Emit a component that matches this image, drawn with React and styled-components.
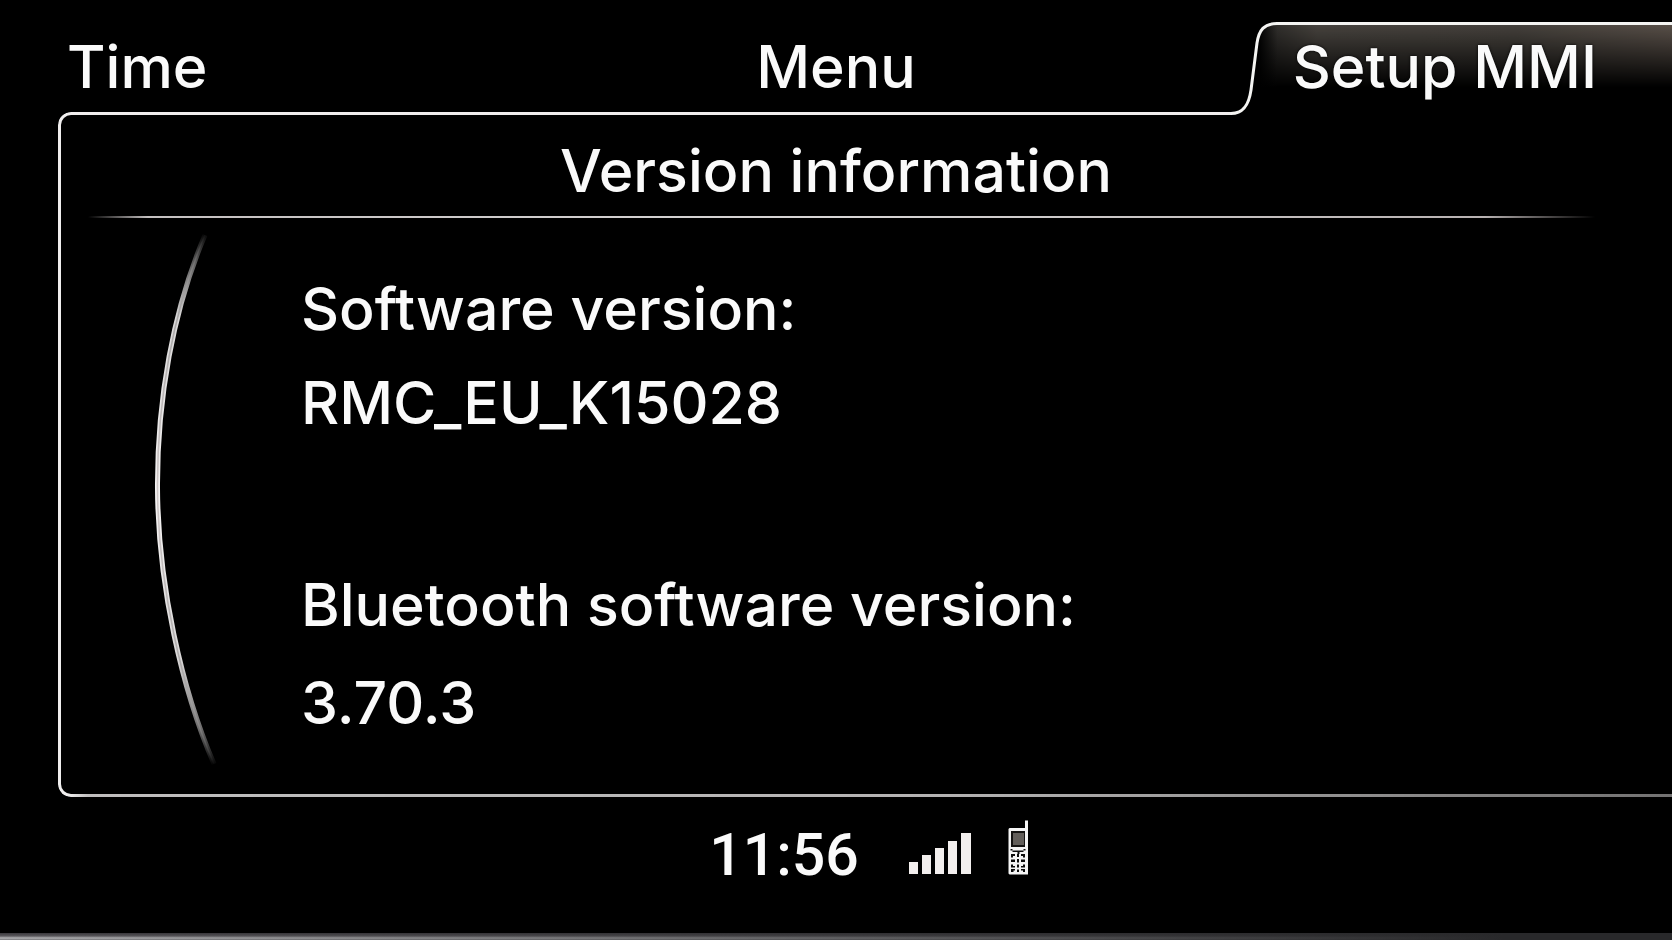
import React from 'react';
import styled, { createGlobalStyle } from 'styled-components';

const GlobalStyle = createGlobalStyle`
  *, *::before, *::after { box-sizing: border-box; }
  html { background: #000; }
  body { margin: 0; background: #000; }
`;

const Screen = styled.div`
  display: flex;
  flex-direction: column;
  min-height: 100vh;
  overflow: hidden;
  background: #000;
  color: #fafafa;
  font-family: Inter, "Liberation Sans", sans-serif;
  font-size: 59px;
  font-weight: 500;
  line-height: 72px;
  white-space: nowrap;
`;

const TopBar = styled.header`
  position: relative;
  z-index: 1;
  display: grid;
  grid-template-columns: 1fr auto 1fr;
  align-items: start;
  margin-bottom: -3px;
  padding-top: 22px;
`;

const SoftKey = styled.button`
  justify-self: ${p => p.$align || 'start'};
  margin: 0;
  padding: 9px 0 0 ${p => p.$inset || 0}px;
  border: 0;
  background: none;
  color: inherit;
  font: inherit;
  cursor: pointer;
`;

const ActiveTab = styled.div`
  display: flex;
  justify-self: end;
  height: 93px;
`;

const TabEdgeSvg = styled.svg`
  flex: none;
  display: block;
  background: #000;
`;

const TabFace = styled.div`
  border-top: 3px solid #f4f4f2;
  background:
    linear-gradient(to bottom, transparent, #000 62px),
    linear-gradient(to right, #312f2c, #46423d 40px, #44403b 240px, #584f48);
`;

const TabKey = styled(SoftKey)`
  padding: 6px 75px 0 16px;
  text-shadow: 0 0 3px #000;
`;

const Panel = styled.main`
  position: relative;
  margin-left: 58px;
  padding: 23px 0 27px 3px;

  &::before {
    content: '';
    position: absolute;
    inset: 0;
    border: 3px solid #f0eeee;
    border-right: 0;
    border-radius: 13px 0 0 13px;
    mask:
      linear-gradient(#000, #000) top / 100% 60% no-repeat,
      linear-gradient(to right, #000 10px, rgba(0, 0, 0, 0.8) 30px, rgba(0, 0, 0, 0.75) 55%, rgba(0, 0, 0, 0.48)) bottom / 100% 40% no-repeat;
    pointer-events: none;
  }
`;

const Title = styled.h1`
  margin: 0 61px 9px 0;
  font: inherit;
  text-align: center;
`;

const Divider = styled.hr`
  height: 2px;
  margin: 0 77px 0 27px;
  border: 0;
  background: linear-gradient(to right, transparent, #c4c0c0 60px, #d8d6d6 50%, #b8b2b2 calc(100% - 110px), transparent);
`;

const Body = styled.div`
  display: flex;
  gap: 81px;
  padding: 8px 0 0 89px;
`;

const ArcSvg = styled.svg`
  flex: none;
  display: block;
`;

const Versions = styled.dl`
  display: flex;
  flex-direction: column;
  gap: 130px;
  margin: 0;
  padding-top: 47px;
`;

const Version = styled.div`
  display: flex;
  flex-direction: column;
  gap: ${p => p.$gap}px;
`;

const Name = styled.dt`
  margin: 0;
`;

const Value = styled.dd`
  margin: 0;
`;

const StatusBar = styled.footer`
  display: flex;
  justify-content: center;
  padding: 22px 0 0 66px;
`;

const Clock = styled.time`
  font-family: Roboto, "Liberation Sans", sans-serif;
`;

const SignalSvg = styled.svg`
  display: block;
  margin: 14px 37px 0 50px;
`;

const PhoneSvg = styled.svg`
  display: block;
  margin-top: 1px;
`;

const Bezel = styled.div`
  height: 7px;
  margin-top: auto;
  background:
    linear-gradient(to right, transparent, #29292b 90%),
    linear-gradient(to bottom, #3a383c, #5a585c 3px, #b4b4b6 5px, #77777a 7px);
`;

function TabEdge() {
  return (
    <TabEdgeSvg width="46" height="93" viewBox="0 0 46 93" aria-hidden="true">
      <defs>
        <linearGradient id="edgeDown" x1="0" y1="0" x2="0" y2="1">
          <stop offset="0" stopColor="#312f2c" />
          <stop offset="0.7" stopColor="#000" />
        </linearGradient>
        <linearGradient id="edgeAcross" x1="0" y1="0" x2="1" y2="0">
          <stop offset="0.6" stopColor="#000" />
          <stop offset="1" stopColor="#000" stopOpacity="0" />
        </linearGradient>
      </defs>
      <path d="M0 91.5C13 91.5 18 82 20 68L26 21C28 8 33 1.500 46 1.500V93H0Z" fill="url(#edgeDown)" />
      <path d="M0 91.5C13 91.5 18 82 20 68L26 21C28 8 33 1.500 46 1.500V93H0Z" fill="url(#edgeAcross)" />
      <path d="M0 91.5C13 91.5 18 82 20 68L26 21C28 8 33 1.500 46 1.500" fill="none" stroke="#f4f4f2" strokeWidth="3" />
    </TabEdgeSvg>
  );
}

const ARC = 'M55 9C23 84 7 174 7.500 262C8 359 32 464 64 538';

function Arc() {
  return (
    <ArcSvg width="70" height="544" viewBox="0 0 70 544" fill="none" aria-hidden="true">
      <defs>
        <linearGradient id="arcRim" gradientUnits="userSpaceOnUse" x1="0" y1="6" x2="0" y2="540">
          <stop offset="0" stopColor="#f2f0f0" stopOpacity="0" />
          <stop offset="0.06" stopColor="#f2f0f0" stopOpacity="0.4" />
          <stop offset="0.16" stopColor="#f2f0f0" stopOpacity="0.9" />
          <stop offset="0.5" stopColor="#f6f4f4" />
          <stop offset="0.8" stopColor="#f2f0f0" stopOpacity="0.9" />
          <stop offset="0.93" stopColor="#f2f0f0" stopOpacity="0.45" />
          <stop offset="1" stopColor="#f2f0f0" stopOpacity="0" />
        </linearGradient>
        <linearGradient id="arcCore" gradientUnits="userSpaceOnUse" x1="0" y1="6" x2="0" y2="540">
          <stop offset="0" stopColor="#888" stopOpacity="0" />
          <stop offset="0.15" stopColor="#a8a6a6" />
          <stop offset="0.5" stopColor="#cfc8c8" />
          <stop offset="0.85" stopColor="#a8a6a6" />
          <stop offset="1" stopColor="#888" stopOpacity="0" />
        </linearGradient>
      </defs>
      <path d={ARC} stroke="url(#arcRim)" strokeWidth="5" />
      <path d={ARC} stroke="url(#arcCore)" strokeWidth="1.600" />
    </ArcSvg>
  );
}

function Signal() {
  return (
    <SignalSvg width="62" height="41" viewBox="0 0 62 41" fill="#f3efee" role="img" aria-label="Signal strength">
      <rect x="0" y="29" width="9" height="12" />
      <rect x="13" y="22" width="9" height="19" />
      <rect x="26" y="15" width="9" height="26" />
      <rect x="39" y="8" width="9" height="33" />
      <rect x="52" y="0" width="10" height="41" />
    </SignalSvg>
  );
}

function Phone() {
  return (
    <PhoneSvg width="21" height="55" viewBox="0 0 21 55" role="img" aria-label="Phone connected">
      <path d="M17 0.500h3V54.500H1.500L0.500 53.500V9L1.500 8H17Z" fill="#f5f5f5" />
      <rect x="3" y="11" width="14" height="16" fill="#141312" />
      <rect x="5" y="13" width="11" height="12" fill="#625e5a" />
      <path
        d="M2.500 29h2v1.500h11V29h2v1.500h-2v1.500h-4v2h-2v-2h-5v-1.500h-2ZM3 34h4v2H5v1.500H3ZM9 34h2v3H9ZM13 34h4v3.500h-2V36h-2ZM3 39.500h4v2.500H3ZM9 39h2v3.500H9ZM13 39.500h4v2.500h-4ZM3 44.500h2V46h2v1.500H3ZM9 44.500h2v3H9ZM13 46h2v-1.500h2v3h-4ZM3 49h4v1.500H5.500V52H3ZM9 49.500h2V52H9ZM13 49h4v3h-2v-1.500h-2Z"
        fill="#0c0c0c"
      />
    </PhoneSvg>
  );
}

const VERSIONS = [
  { name: 'Software version:', value: 'RMC_EU_K15028', gap: 22 },
  { name: 'Bluetooth software version:', value: '3.70.3', gap: 26 },
];

export default function App() {
  return (
    <Screen>
      <GlobalStyle />
      <TopBar>
        <SoftKey type="button" $inset={67}>Time</SoftKey>
        <SoftKey type="button" $align="center">Menu</SoftKey>
        <ActiveTab>
          <TabEdge />
          <TabFace>
            <TabKey type="button">Setup MMI</TabKey>
          </TabFace>
        </ActiveTab>
      </TopBar>
      <Panel>
        <Title>Version information</Title>
        <Divider />
        <Body>
          <Arc />
          <Versions>
            {VERSIONS.map(v => (
              <Version key={v.name} $gap={v.gap}>
                <Name>{v.name}</Name>
                <Value>{v.value}</Value>
              </Version>
            ))}
          </Versions>
        </Body>
      </Panel>
      <StatusBar>
        <Clock>11:56</Clock>
        <Signal />
        <Phone />
      </StatusBar>
      <Bezel />
    </Screen>
  );
}
